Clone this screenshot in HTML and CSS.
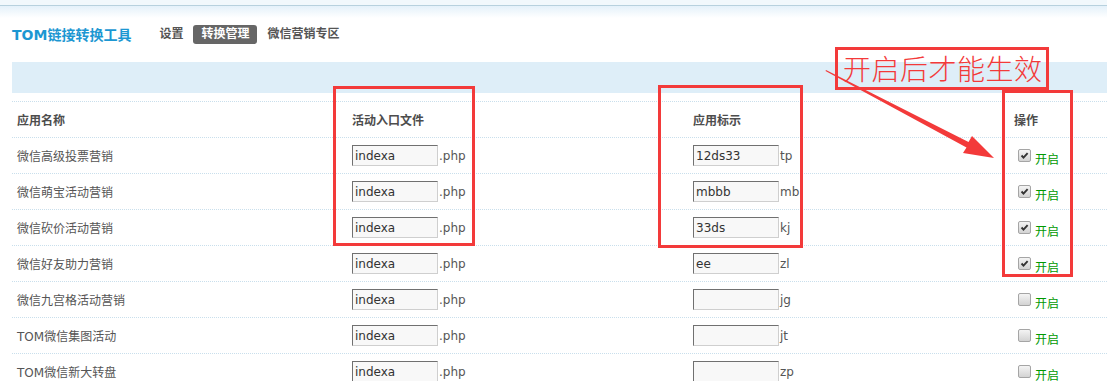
FILE: index.html
```html
<!DOCTYPE html>
<html>
<head>
    <meta charset="utf-8">
    <title>TOM链接转换工具</title>
    <link rel="stylesheet" href="styles.css">
</head>
<body>
    <div class="topbar"></div>
    <div class="topfade"></div>

    <div class="head">
        <span class="logo">TOM链接转换工具</span>
        <ul class="nav">
            <li><a href="#">设置</a></li>
            <li class="on"><a href="#">转换管理</a></li>
            <li><a href="#">微信营销专区</a></li>
        </ul>
    </div>

    <div class="main">
        <div class="bluebar"></div>

        <div class="list">
            <div class="row th">
                <div class="cell">应用名称</div>
                <div class="cell">活动入口文件</div>
                <div class="cell">应用标示</div>
                <div class="cell op">操作</div>
            </div>
            <div class="row">
                <div class="cell">微信高级投票营销</div>
                <div class="cell"><input class="txt" type="text" value="indexa">.php</div>
                <div class="cell"><input class="txt" type="text" value="12ds33">tp</div>
                <div class="cell op"><span class="chk on"><svg viewBox="0 0 13 13"><path d="M3 6.5 L5.3 9 L10.2 3.6" /></svg></span><span class="open">开启</span></div>
            </div>
            <div class="row">
                <div class="cell">微信萌宝活动营销</div>
                <div class="cell"><input class="txt" type="text" value="indexa">.php</div>
                <div class="cell"><input class="txt" type="text" value="mbbb">mb</div>
                <div class="cell op"><span class="chk on"><svg viewBox="0 0 13 13"><path d="M3 6.5 L5.3 9 L10.2 3.6" /></svg></span><span class="open">开启</span></div>
            </div>
            <div class="row">
                <div class="cell">微信砍价活动营销</div>
                <div class="cell"><input class="txt" type="text" value="indexa">.php</div>
                <div class="cell"><input class="txt" type="text" value="33ds">kj</div>
                <div class="cell op"><span class="chk on"><svg viewBox="0 0 13 13"><path d="M3 6.5 L5.3 9 L10.2 3.6" /></svg></span><span class="open">开启</span></div>
            </div>
            <div class="row">
                <div class="cell">微信好友助力营销</div>
                <div class="cell"><input class="txt" type="text" value="indexa">.php</div>
                <div class="cell"><input class="txt" type="text" value="ee">zl</div>
                <div class="cell op"><span class="chk on"><svg viewBox="0 0 13 13"><path d="M3 6.5 L5.3 9 L10.2 3.6" /></svg></span><span class="open">开启</span></div>
            </div>
            <div class="row">
                <div class="cell">微信九宫格活动营销</div>
                <div class="cell"><input class="txt" type="text" value="indexa">.php</div>
                <div class="cell"><input class="txt" type="text" value="">jg</div>
                <div class="cell op"><span class="chk"></span><span class="open">开启</span></div>
            </div>
            <div class="row">
                <div class="cell">TOM微信集图活动</div>
                <div class="cell"><input class="txt" type="text" value="indexa">.php</div>
                <div class="cell"><input class="txt" type="text" value="">jt</div>
                <div class="cell op"><span class="chk"></span><span class="open">开启</span></div>
            </div>
            <div class="row">
                <div class="cell">TOM微信新大转盘</div>
                <div class="cell"><input class="txt" type="text" value="indexa">.php</div>
                <div class="cell"><input class="txt" type="text" value="">zp</div>
                <div class="cell op"><span class="chk"></span><span class="open">开启</span></div>
            </div>
        </div>
    </div>

    <!-- red annotations drawn over the screenshot -->
    <div class="marks">
        <div class="box box-file"></div>
        <div class="box box-mark"></div>
        <div class="box box-op"></div>
        <div class="box box-note">开启后才能生效</div>
        <svg class="arrow" width="1107" height="381">
            <polygon points="826,70 968.5,142 972,136 994,158 963,153 966.5,147.5 825.5,71" />
        </svg>
    </div>
</body>
</html>
```

FILE: styles.css
```css
body {
    margin: 0;
    font-family: "DejaVu Sans", "Noto Sans CJK SC", sans-serif;
    font-size: 12px;
    color: #555;
    background-color: #fff;
}

.topbar {
    height: 5px;
    background-color: #f1f8fc;
    border-bottom: 1px solid #b7d1de;
}

.topfade {
    height: 12px;
    background: linear-gradient(#e4f1fa, #fff);
}

.head {
    display: flex;
    align-items: center;
    height: 32px;
    padding-left: 12px;
    margin-bottom: 12px;
}

.logo {
    font-size: 14px;
    font-weight: bold;
    color: #1c97d2;
}

.nav {
    display: flex;
    list-style: none;
    margin: 0 0 0 20px;
    padding: 0;
}

.nav li {
    margin-right: 2px;
}

.nav a {
    display: block;
    height: 19px;
    line-height: 19px;
    padding: 0 8px;
    font-weight: bold;
    color: #555;
    text-decoration: none;
    border-radius: 3px;
}

.nav .on a {
    background-color: #666;
    color: #fff;
}

.main {
    padding-left: 12px;
}

.bluebar {
    height: 31px;
    background-color: #deeef8;
    margin-bottom: 8px;
}

.row {
    display: grid;
    grid-template-columns: 335px 341px 321px 1fr;
    align-items: center;
    height: 36px;
    box-sizing: border-box;
    border-top: 1px dotted #c9dfec;
}

.cell {
    display: flex;
    align-items: center;
    padding-left: 5px;
    white-space: nowrap;
}

.th .cell {
    font-weight: bold;
    color: #4d4d4d;
}

.txt {
    width: 86px;
    height: 21px;
    box-sizing: border-box;
    margin: 0 1px 0 0;
    padding: 0 2px;
    border: 1px solid;
    border-color: #707070 #cfcfcf #cfcfcf #707070;
    background-color: #f8f8f8;
    font-family: "DejaVu Sans", sans-serif;
    font-size: 12px;
    color: #333;
}

.op {
    padding-left: 9px;
}

.th .op {
    padding-left: 5px;
}

.chk {
    display: inline-block;
    width: 11px;
    height: 11px;
    border: 1px solid #a5a5a5;
    border-radius: 2px;
    background: linear-gradient(#f4f4f4, #d3d3d3);
}

.chk svg {
    display: block;
    width: 11px;
    height: 11px;
}

.chk path {
    fill: none;
    stroke: #333;
    stroke-width: 2.2;
}

.open {
    margin: 6px 0 0 4px;
    color: #009900;
}

.marks {
    position: absolute;
    left: 0;
    top: 0;
    width: 1107px;
    height: 381px;
    pointer-events: none;
}

.box {
    position: absolute;
    box-sizing: border-box;
    border: 3px solid #f33a3a;
}

.box-file {
    left: 333px;
    top: 86px;
    width: 142px;
    height: 160px;
}

.box-mark {
    left: 658px;
    top: 85px;
    width: 145px;
    height: 163px;
}

.box-op {
    left: 1002px;
    top: 90px;
    width: 71px;
    height: 187px;
}

.box-note {
    left: 835px;
    top: 47px;
    width: 214px;
    height: 43px;
    padding-left: 5px;
    line-height: 36px;
    font-family: "Noto Sans CJK SC", sans-serif;
    font-size: 28px;
    font-weight: 300;
    letter-spacing: 0.5px;
    color: #f33a3a;
    white-space: nowrap;
}

.arrow {
    position: absolute;
    left: 0;
    top: 0;
}

.arrow polygon {
    fill: #f33a3a;
}
```
